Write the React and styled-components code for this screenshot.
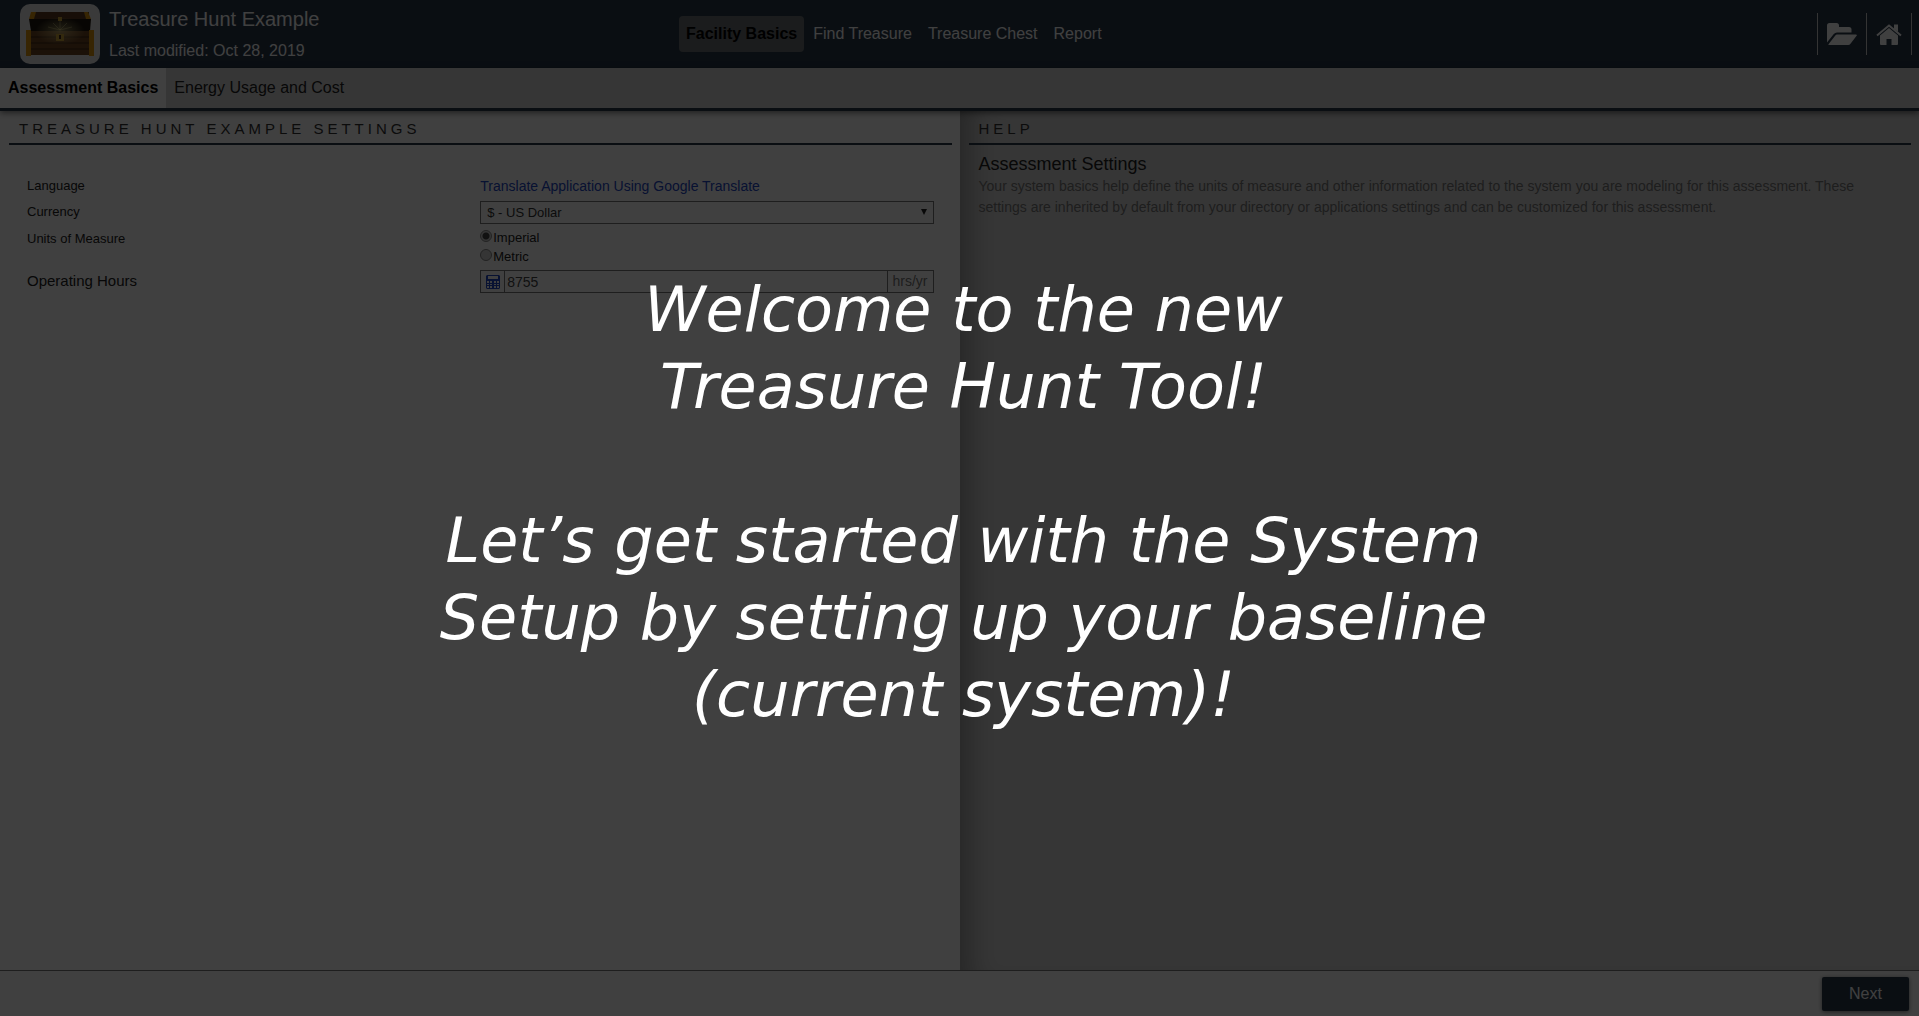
import React from "react";
import styled, { createGlobalStyle, css } from "styled-components";

const Global = createGlobalStyle`
  *, *::before, *::after { box-sizing: border-box; }
  html, body, #root { height: 100%; }
  body { margin: 0; background: #fff; overflow: hidden; }
  body, button, input, select {
    font-family: "Liberation Sans", Arial, Helvetica, sans-serif;
  }
`;

const navy = "#28384a";

const Page = styled.div`
  position: relative;
  min-height: 100%;
  display: flex;
  flex-direction: column;
  font-size: 16px;
  color: #000;
`;

const Header = styled.header`
  display: grid;
  grid-template-columns: minmax(auto, 679px) 1fr auto;
  align-items: center;
  height: 68px;
  padding: 0 7px 0 0;
  background: ${navy};
  color: #fff;
`;

const Brand = styled.div`
  display: flex;
  align-items: center;
  gap: 9px;
  padding-left: 20px;
`;

const Logo = styled.div`
  display: grid;
  place-items: center;
  width: 80px;
  height: 60px;
  border-radius: 10px;
  background: #e8e8e8;
`;

const BrandText = styled.div`
  padding-top: 2px;
`;

const Title = styled.h1`
  margin: 0;
  font-size: 20px;
  line-height: 32px;
  font-weight: 400;
`;

const Modified = styled.p`
  margin: 0;
  font-size: 16px;
  line-height: 32px;
`;

const MainNav = styled.nav`
  display: flex;
  gap: 2px;
`;

const NavLink = styled.a`
  padding: 0 7px;
  line-height: 36px;
  border-radius: 4px;
  color: #fff;
  text-decoration: none;
  white-space: nowrap;
  ${(p) => p.$active && css`
    background: #6c7074;
    color: #000;
    font-weight: 700;
  `}
`;

const Tools = styled.div`
  display: flex;
  height: 42px;
  border-left: 1px solid #d0d0d0;
`;

const ToolButton = styled.button`
  display: grid;
  place-items: center;
  padding: 0 9px;
  border: 0;
  border-right: 1px solid #d0d0d0;
  background: none;
  color: #fff;
`;

const TabBar = styled.nav`
  position: relative;
  display: flex;
  height: 43px;
  border-bottom: 3px solid ${navy};
  background: #d8d8d8;
  box-shadow: 0 2px 6px rgba(0, 0, 0, 0.5);
`;

const Tab = styled.a`
  padding: 0 8px;
  line-height: 40px;
  color: #222;
  text-decoration: none;
  ${(p) => p.$active && css`
    background: #fff;
    color: #000;
    font-weight: 700;
  `}
`;

const Columns = styled.main`
  flex: 1;
  display: grid;
  grid-template-columns: 1fr 1fr;
`;

const Panel = styled.section`
  padding: 0 8px 0 9px;
  background: ${(p) => (p.$help ? "#d8d8d8" : "#fff")};
  box-shadow: ${(p) => (p.$help ? "inset 30px 0 30px -20px rgba(0, 0, 0, 0.3)" : "none")};
`;

const PanelTitle = styled.h2`
  margin: 0;
  padding: 4px 10px 0;
  border-bottom: 2px solid ${navy};
  font-size: 15px;
  line-height: 28px;
  font-weight: 400;
  letter-spacing: 4px;
  text-transform: uppercase;
  color: #333;
`;

const Form = styled.form`
  display: grid;
  grid-template-columns: 1fr 1fr;
  row-gap: 4px;
  padding: 30px 18px 0;
`;

const Label = styled.label`
  font-size: ${(p) => (p.$large ? 15 : 13)}px;
  line-height: ${(p) => (p.$large ? 22 : 21)}px;
  color: #222;
`;

const Translate = styled.a`
  font-size: 14px;
  line-height: 22px;
  color: #2347c5;
  text-decoration: none;
`;

const SelectBox = styled.div`
  position: relative;
  display: flex;
`;

const Select = styled.select`
  appearance: none;
  flex: 1;
  height: 23px;
  padding: 0 6px;
  border: 1px solid #777;
  border-radius: 0;
  background: #fff;
  font-size: 13px;
  color: #333;
`;

const Arrow = styled.svg`
  position: absolute;
  right: 7px;
  top: 8px;
  pointer-events: none;
`;

const Radios = styled.div`
  display: flex;
  flex-direction: column;
`;

const RadioLabel = styled.label`
  display: flex;
  gap: 1px;
  font-size: 13px;
  line-height: 19px;
  color: #222;
`;

const Radio = styled.input`
  appearance: none;
  width: 12px;
  height: 12px;
  margin: 2px 0 0;
  border: 1px solid #888;
  border-radius: 50%;
  background: #d4d4d4;
  &:checked { background: radial-gradient(circle, #444 3px, #d4d4d4 4px); }
`;

const InputGroup = styled.div`
  display: flex;
  height: 23px;
  border: 1px solid #777;
`;

const CalcButton = styled.button`
  display: grid;
  place-items: center;
  width: 24px;
  padding: 0;
  border: 0;
  border-right: 1px solid #777;
  background: none;
  color: #2347c5;
`;

const HoursInput = styled.input`
  flex: 1;
  min-width: 0;
  padding: 0 2px;
  border: 0;
  background: none;
  font-size: 14px;
  color: #444;
`;

const Unit = styled.span`
  padding: 0 5px;
  border-left: 1px solid #777;
  font-size: 14px;
  line-height: 21px;
  color: #777;
`;

const HelpBody = styled.div`
  padding: 8px 10px;
`;

const HelpTitle = styled.h3`
  margin: 0;
  font-size: 18px;
  line-height: 23px;
  font-weight: 400;
  color: #222;
`;

const HelpText = styled.p`
  margin: 0;
  font-size: 14px;
  line-height: 21px;
  color: #777;
`;

const Footer = styled.footer`
  display: flex;
  justify-content: flex-end;
  padding: 6px 10px 5px;
  border-top: 1px solid #777;
  background: #fff;
`;

const Next = styled.button`
  width: 87px;
  height: 34px;
  border: 0;
  border-radius: 2px;
  background: ${navy};
  box-shadow: 0 1px 4px rgba(0, 0, 0, 0.5);
  color: #fff;
  font-size: 16px;
`;

const Overlay = styled.div`
  position: absolute;
  inset: 0;
  display: flex;
  flex-direction: column;
  align-items: center;
  gap: 77px;
  padding: 271px 0 0 8px;
  background: rgba(0, 0, 0, 0.75);
  color: #fff;
`;

const Message = styled.p`
  margin: 0;
  font-family: "DejaVu Sans", "Noto Sans", sans-serif;
  font-size: 62px;
  font-style: italic;
  font-weight: 400;
  line-height: 77px;
  text-align: center;
`;

const Chest = () => (
  <svg width="68" height="46" viewBox="0 0 68 46" aria-hidden="true">
    <defs>
      <radialGradient id="glow" cx="50%" cy="50%" r="50%">
        <stop offset="0" stopColor="#fff3a0" stopOpacity=".5" />
        <stop offset="1" stopColor="#fff3a0" stopOpacity="0" />
      </radialGradient>
    </defs>
    <path d="M5 1h58v7H5z" fill="#5c3b22" />
    <path d="M3 8h62l-1 12H5z" fill="#1c140c" />
    <path d="M4 20h60v24H4z" fill="#6b4423" />
    <path d="M4 26h60M4 32h60M4 38h60" stroke="#3e2614" />
    <path d="M5 1h5l-2 7H3zM58 1h4l3 7h-5zM0 19h5v26H0zM63 19h5v26h-5z" fill="#d9920f" />
    <ellipse cx="34" cy="20" rx="25" ry="14" fill="url(#glow)" />
    <path d="M34 19V10M34 19l-7-7M34 19l7-7M34 19l-12-3M34 19l12-3" stroke="#fff3a0" strokeOpacity=".35" />
    <path d="M32 6h4v4h-4zM30 23h8v7h-8z" fill="#c9a53a" />
    <path d="M33 24h2v4h-2z" fill="#3e2614" />
  </svg>
);

const Calculator = () => (
  <svg width="14" height="14" viewBox="0 0 14 14" aria-hidden="true">
    <path
      fill="currentColor"
      fillRule="evenodd"
      d="M1 0h12l1 1v12l-1 1H1l-1-1V1zM2 1v3h10V1zM1 6v2h2V6zM4 6v2h2V6zM8 6v2h2V6zM11 6v2h2V6zM1 9v1h2V9zM4 9v1h2V9zM8 9v1h2V9zM11 9v1h2V9zM1 11v2h2v-2zM4 11v2h2v-2zM8 11v2h2v-2zM11 11v2h2v-2z"
    />
  </svg>
);

const FolderIcon = () => (
  <svg width="30" height="22" viewBox="0 0 30 22" fill="currentColor" aria-hidden="true">
    <path d="M0 2.500Q0 0 2.500 0H9.500Q12 0 12 2.500V4H22Q24.500 4 24.500 6.500V9.500H10Q8 9.500 6.800 11L0 19.500z" />
    <path d="M8.300 12.400Q9 11.500 10 11.500H29Q30.500 11.500 29.600 12.700L23.500 20.800Q22.600 22 21.200 22H2Q.9 22 1.700 21z" />
  </svg>
);

const HomeIcon = () => (
  <svg width="26" height="21" viewBox="0 0 26 21" aria-hidden="true">
    <path d="M1 11.500L13 1.500l12 10" fill="none" stroke="currentColor" strokeWidth="2" />
    <path d="M18 .5h4v7.500l-4-3.300z" fill="currentColor" />
    <path d="M4 11.500L13 4l9 7.500V20q0 1-1 1h-5.500v-6h-5v6H5q-1 0-1-1z" fill="currentColor" />
  </svg>
);

export default function App() {
  return (
    <Page>
      <Global />
      <Header>
        <Brand>
          <Logo><Chest /></Logo>
          <BrandText>
            <Title>Treasure Hunt Example</Title>
            <Modified>Last modified: Oct 28, 2019</Modified>
          </BrandText>
        </Brand>
        <MainNav>
          <NavLink href="#basics" $active>Facility Basics</NavLink>
          <NavLink href="#find">Find Treasure</NavLink>
          <NavLink href="#chest">Treasure Chest</NavLink>
          <NavLink href="#report">Report</NavLink>
        </MainNav>
        <Tools>
          <ToolButton type="button" aria-label="Open folder"><FolderIcon /></ToolButton>
          <ToolButton type="button" aria-label="Home"><HomeIcon /></ToolButton>
        </Tools>
      </Header>
      <TabBar>
        <Tab href="#assessment" $active>Assessment Basics</Tab>
        <Tab href="#energy">Energy Usage and Cost</Tab>
      </TabBar>
      <Columns>
        <Panel>
          <PanelTitle>Treasure Hunt Example Settings</PanelTitle>
          <Form>
            <Label as="span">Language</Label>
            <Translate href="#translate">Translate Application Using Google Translate</Translate>
            <Label htmlFor="currency">Currency</Label>
            <SelectBox>
              <Select id="currency" defaultValue="usd">
                <option value="usd">$ - US Dollar</option>
              </Select>
              <Arrow width="6" height="6" viewBox="0 0 6 6" aria-hidden="true"><path d="M0 0h6L3 6z" fill="#222" /></Arrow>
            </SelectBox>
            <Label as="span" id="units">Units of Measure</Label>
            <Radios role="radiogroup" aria-labelledby="units">
              <RadioLabel><Radio type="radio" name="units" defaultChecked />Imperial</RadioLabel>
              <RadioLabel><Radio type="radio" name="units" />Metric</RadioLabel>
            </Radios>
            <Label htmlFor="hours" $large>Operating Hours</Label>
            <InputGroup>
              <CalcButton type="button" aria-label="Calculate operating hours"><Calculator /></CalcButton>
              <HoursInput id="hours" type="text" defaultValue="8755" />
              <Unit>hrs/yr</Unit>
            </InputGroup>
          </Form>
        </Panel>
        <Panel $help>
          <PanelTitle>Help</PanelTitle>
          <HelpBody>
            <HelpTitle>Assessment Settings</HelpTitle>
            <HelpText>
              Your system basics help define the units of measure and other information related to the system you are modeling for this assessment. These settings are inherited by default from your directory or applications settings and can be customized for this assessment.
            </HelpText>
          </HelpBody>
        </Panel>
      </Columns>
      <Footer><Next type="button">Next</Next></Footer>
      <Overlay>
        <Message>Welcome to the new<br />Treasure Hunt Tool!</Message>
        <Message>Let’s get started with the System<br />Setup by setting up your baseline<br />(current system)!</Message>
      </Overlay>
    </Page>
  );
}
